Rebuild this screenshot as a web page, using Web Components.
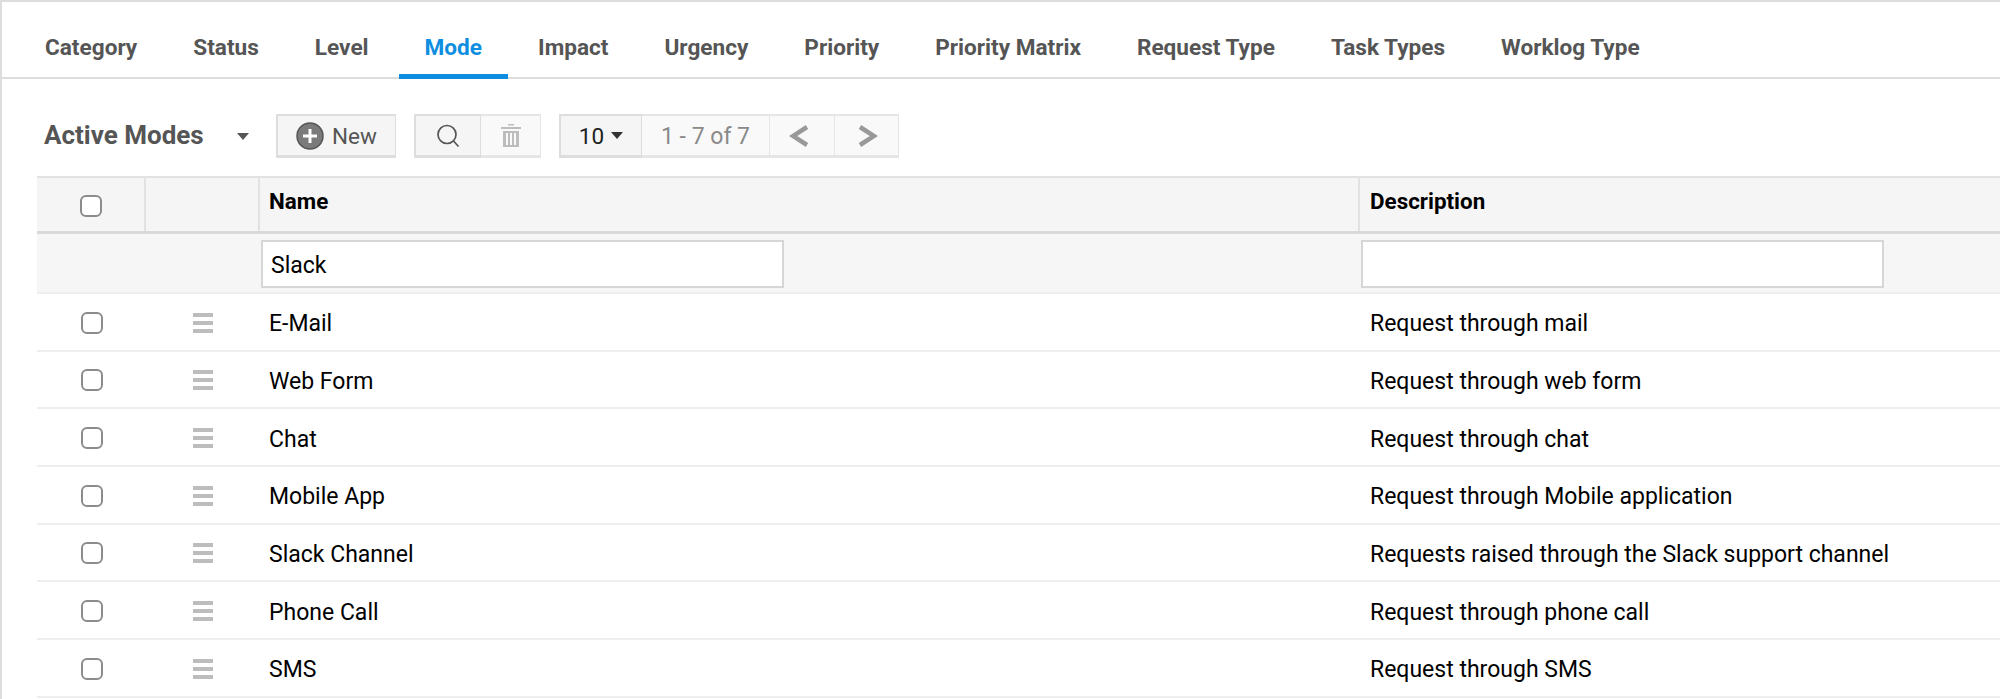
<!DOCTYPE html>
<html>
<head>
<meta charset="utf-8">
<title>Modes</title>
<style>
html,body{margin:0;padding:0;background:#fff;}
body{font-family:Roboto,"Liberation Sans",sans-serif;height:699px;overflow:hidden;}
</style>
</head>
<body>
<modes-page>
  <tab-bar>
    <tab-item>Category</tab-item>
    <tab-item>Status</tab-item>
    <tab-item>Level</tab-item>
    <tab-item active>Mode</tab-item>
    <tab-item>Impact</tab-item>
    <tab-item>Urgency</tab-item>
    <tab-item>Priority</tab-item>
    <tab-item>Priority Matrix</tab-item>
    <tab-item>Request Type</tab-item>
    <tab-item>Task Types</tab-item>
    <tab-item>Worklog Type</tab-item>
  </tab-bar>
  <list-toolbar></list-toolbar>
  <mode-table>
    <mode-row><span slot="name">E-Mail</span><span slot="desc">Request through mail</span></mode-row>
    <mode-row><span slot="name">Web Form</span><span slot="desc">Request through web form</span></mode-row>
    <mode-row><span slot="name">Chat</span><span slot="desc">Request through chat</span></mode-row>
    <mode-row><span slot="name">Mobile App</span><span slot="desc">Request through Mobile application</span></mode-row>
    <mode-row><span slot="name">Slack Channel</span><span slot="desc">Requests raised through the Slack support channel</span></mode-row>
    <mode-row><span slot="name">Phone Call</span><span slot="desc">Request through phone call</span></mode-row>
    <mode-row><span slot="name">SMS</span><span slot="desc">Request through SMS</span></mode-row>
  </mode-table>
</modes-page>

<script>
class ModesPage extends HTMLElement {
    constructor() {
        super();
        this.attachShadow({ mode: 'open' });
        this.shadowRoot.innerHTML = `
<style>
:host{display:block;height:697px;border-top:2px solid #ddd;border-left:2px solid #ddd;font-family:Roboto,"Liberation Sans",sans-serif;}
</style>
<slot></slot>`;
    }
}

class TabBar extends HTMLElement {
    constructor() {
        super();
        this.attachShadow({ mode: 'open' });
        this.shadowRoot.innerHTML = `
<style>
:host{display:flex;gap:4px;height:75px;padding-left:17px;border-bottom:2px solid #ddd;box-sizing:content-box;}
</style>
<slot></slot>`;
    }
}

class TabItem extends HTMLElement {
    constructor() {
        super();
        this.attachShadow({ mode: 'open' });
        this.shadowRoot.innerHTML = `
<style>
:host{display:block;padding:0 26px;height:75px;line-height:92px;box-sizing:border-box;font-size:22.6px;font-weight:700;color:#555;white-space:nowrap;}
:host([active]){color:#0e8ee0;border-bottom:5px solid #0e8ee0;height:77px;}
</style>
<slot></slot>`;
    }
}

class ToolBtn extends HTMLElement {
    constructor() {
        super();
        this.attachShadow({ mode: 'open' });
        this.shadowRoot.innerHTML = `
<style>
:host{display:flex;align-items:center;justify-content:center;gap:8px;height:44px;box-sizing:border-box;background:#f5f5f5;border:1px solid #ddd;border-top-width:2px;border-bottom-width:3px;border-left-width:2px;font-size:22.5px;color:#555;}
:host([off]){background:#f9f9f9;color:#8a8a8a;border-color:#e6e6e6;}
svg{display:block;}
</style>
<slot></slot>`;
    }
}

class ListToolbar extends HTMLElement {
    constructor() {
        super();
        this.attachShadow({ mode: 'open' });
        this.shadowRoot.innerHTML = `
<style>
:host{display:flex;align-items:center;height:44px;margin-top:35px;margin-left:42px;}
.title{font-size:26px;font-weight:700;color:#555;width:193px;white-space:nowrap;position:relative;top:-1px;}
.caret{width:0;height:0;border:6.5px solid transparent;border-top:7px solid #555;border-bottom:0;margin-right:27px;}
.group{display:flex;margin-right:18px;}
.new{width:120px;}
.search{width:67px;}
.trash{width:60px;border-left:0;}
.size{width:83px;color:#222;gap:7px;}
.range{width:128px;border-left:0;font-size:23px;padding-top:2px;}
.prev{width:65px;border-left:0;}
.prev svg{margin-right:6px;}
.next{width:64px;border-left:0;}
.next svg{margin-left:3px;}
.tri{width:0;height:0;border:6px solid transparent;border-top:7px solid #333;border-bottom:0;}
</style>
<span class="title">Active Modes</span>
<span class="caret"></span>
<div class="group">
  <tool-btn class="new">
    <svg width="28" height="28" viewBox="0 0 28 28"><circle cx="14" cy="14" r="13" fill="#7b7b7b" stroke="#555" stroke-width="1.5"/><path d="M14 7v14M7 14h14" stroke="#fff" stroke-width="3"/></svg>
    New
  </tool-btn>
</div>
<div class="group">
  <tool-btn class="search">
    <svg width="24" height="24" viewBox="0 0 24 24" fill="none" stroke="#555" stroke-width="1.7"><circle cx="11" cy="10.5" r="9"/><path d="M17.5 17l5 5.5"/></svg>
  </tool-btn>
  <tool-btn class="trash" off>
    <svg width="20" height="23" viewBox="0 0 20 23" fill="#bdbdbd"><rect x="7" y="0" width="6" height="1.5"/><rect x="0" y="3" width="20" height="2"/><path d="M2 7h16v16H2zM5 9v12h2V9zM9 9v12h2V9zM13 9v12h2V9z" fill-rule="evenodd"/></svg>
  </tool-btn>
</div>
<div class="group">
  <tool-btn class="size">10<span class="tri"></span></tool-btn>
  <tool-btn class="range" off>1 - 7 of 7</tool-btn>
  <tool-btn class="prev" off>
    <svg width="20" height="22" viewBox="0 0 20 22" fill="none" stroke="#999" stroke-width="4.5"><path d="M18 2L4 11l14 9"/></svg>
  </tool-btn>
  <tool-btn class="next" off>
    <svg width="20" height="22" viewBox="0 0 20 22" fill="none" stroke="#999" stroke-width="4.5"><path d="M2 2l14 9L2 20"/></svg>
  </tool-btn>
</div>`;
    }
}

class CheckBox extends HTMLElement {
    constructor() {
        super();
        this.attachShadow({ mode: 'open' });
        this.shadowRoot.innerHTML = `
<style>
:host{display:block;width:22px;height:22px;box-sizing:border-box;background:#fff;border:2px solid #8c8c8c;border-radius:6px;}
</style>`;
    }
}

class ModeTable extends HTMLElement {
    constructor() {
        super();
        this.attachShadow({ mode: 'open' });
        this.shadowRoot.innerHTML = `
<style>
:host{display:block;margin-left:35px;margin-top:18px;font-size:23px;color:#000;}
.head,.filter{display:grid;grid-template-columns:109px 114px 1100px 1fr;background:#f5f5f5;}
.head{height:58px;box-sizing:border-box;border-top:2px solid #e2e2e2;border-bottom:3px solid #d9d9d9;font-size:22.4px;font-weight:700;}
.head > div{border-right:2px solid #e2e2e2;padding-left:9px;line-height:46px;}
.head > div:last-child{border-right:0;padding-left:10px;}
.head .check{display:flex;align-items:center;justify-content:center;padding-left:0;padding-top:3px;}
.filter{height:60px;box-sizing:border-box;border-bottom:2px solid #eee;background:#f6f6f6;}
.filter .inp{padding-top:6px;padding-left:1px;}
.filter input{display:block;width:523px;height:48px;box-sizing:border-box;border:2px solid #d6d6d6;background:#fff;font:23px Roboto,"Liberation Sans",sans-serif;color:#000;padding:2px 8px 0;margin:0;outline:0;}
</style>
<div class="head">
  <div class="check"><check-box></check-box></div>
  <div></div>
  <div>Name</div>
  <div>Description</div>
</div>
<div class="filter">
  <div></div>
  <div></div>
  <div class="inp"><input value="Slack"></div>
  <div class="inp"><input></div>
</div>
<slot></slot>`;
    }
}

class ModeRow extends HTMLElement {
    constructor() {
        super();
        this.attachShadow({ mode: 'open' });
        this.shadowRoot.innerHTML = `
<style>
:host{display:grid;grid-template-columns:109px 114px 1100px 1fr;align-items:center;height:57.67px;padding-top:2px;box-sizing:border-box;border-bottom:2px solid #eee;}
.check{display:flex;justify-content:center;}
.grip{display:flex;flex-direction:column;gap:4px;width:20px;margin-left:47px;}
.grip i{display:block;height:4px;background:#bdbdbd;}
.name{padding:2px 0 0 9px;}
.desc{padding:2px 0 0 10px;}
</style>
<div class="check"><check-box></check-box></div>
<div class="grip"><i></i><i></i><i></i></div>
<div class="name"><slot name="name"></slot></div>
<div class="desc"><slot name="desc"></slot></div>`;
    }
}

customElements.define('modes-page', ModesPage);
customElements.define('tab-bar', TabBar);
customElements.define('tab-item', TabItem);
customElements.define('tool-btn', ToolBtn);
customElements.define('list-toolbar', ListToolbar);
customElements.define('check-box', CheckBox);
customElements.define('mode-table', ModeTable);
customElements.define('mode-row', ModeRow);
</script>
</body>
</html>
